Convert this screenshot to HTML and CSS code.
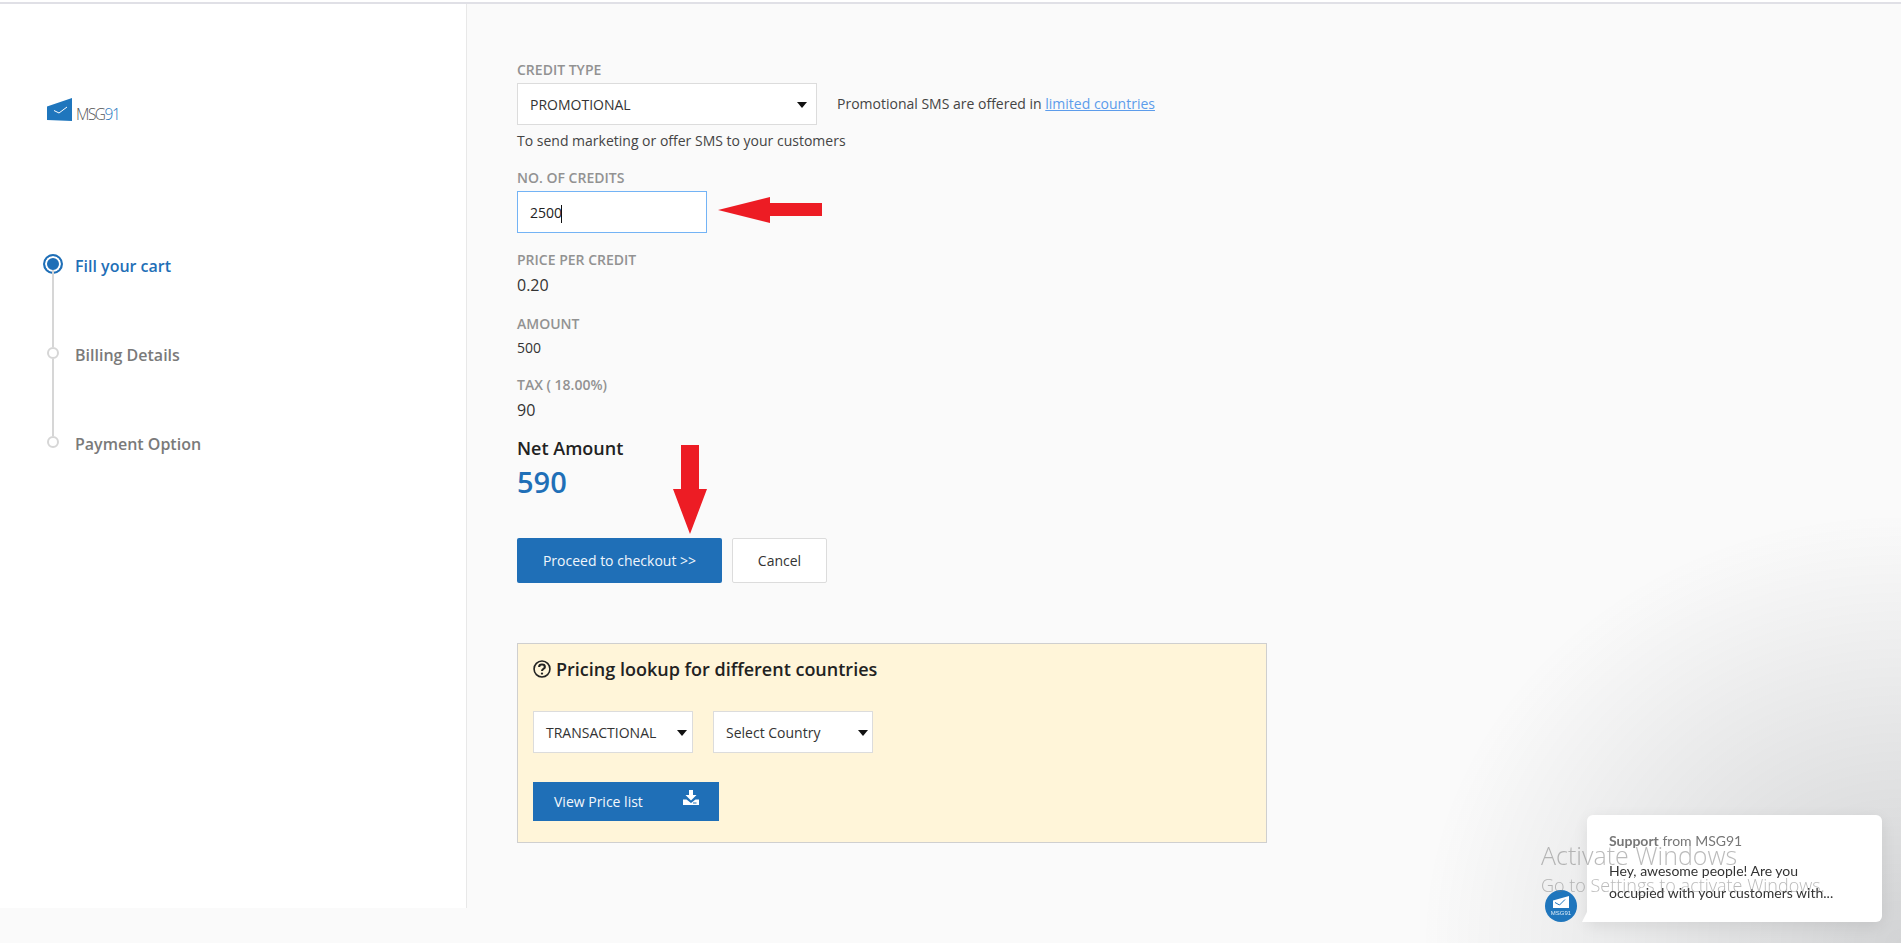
FILE: index.html
```html
<!DOCTYPE html>
<html lang="en">
<head>
<meta charset="utf-8">
<title>MSG91 - Fill your cart</title>
<link rel="stylesheet" href="styles.css">
</head>
<body>
<div class="topline"></div>
<div class="page">
  <aside class="sidebar">
    <div class="logo">
      <svg class="logo-mark" width="25" height="23" viewBox="0 0 25 23"><path fill="#1f76bd" d="M0 8.500 25 0V23L0 22Z"/><path fill="none" stroke="#fff" stroke-width="1" d="M7 12.500 12 15 20 9"/></svg>
      <span class="logo-text">MSG<span class="logo-num">91</span></span>
    </div>
    <ol class="steps">
      <li class="step step-active"><span class="dot"></span>Fill your cart</li>
      <li class="step"><span class="dot"></span>Billing Details</li>
      <li class="step"><span class="dot"></span>Payment Option</li>
    </ol>
  </aside>
  <main class="content">
    <div class="label label-first">CREDIT TYPE</div>
    <div class="type-row">
      <div class="select select-type">PROMOTIONAL<span class="caret"></span></div>
      <span class="type-note">Promotional SMS are offered in <a href="#">limited countries</a></span>
    </div>
    <p class="hint">To send marketing or offer SMS to your customers</p>
    <div class="label label-credits">NO. OF CREDITS</div>
    <div class="credits-row">
      <div class="input">2500<span class="cursor"></span></div>
      <svg class="arrow-left" width="104" height="26" viewBox="0 0 104 26"><path fill="#ed1c24" d="M0 13 52 0V6H104V19H52V26Z"/></svg>
    </div>
    <div class="label label-price">PRICE PER CREDIT</div>
    <div class="value value-lg">0.20</div>
    <div class="label label-amount">AMOUNT</div>
    <div class="value value-sm">500</div>
    <div class="label label-tax">TAX ( 18.00%)</div>
    <div class="value value-lg">90</div>
    <div class="net-label">Net Amount</div>
    <div class="net-value">590</div>
    <div class="actions">
      <button class="btn btn-primary">Proceed to checkout &gt;&gt;</button>
      <button class="btn btn-cancel">Cancel</button>
      <svg class="arrow-down" width="34" height="89" viewBox="0 0 34 89"><path fill="#ed1c24" d="M8 0H26V44H34L17 89 0 44H8Z"/></svg>
    </div>
    <section class="lookup">
      <h3 class="lookup-title">
        <svg width="18" height="18" viewBox="0 0 17 17"><circle cx="8.500" cy="8.500" r="7.500" fill="none" stroke="#222" stroke-width="1.500"/><path fill="none" stroke="#222" stroke-width="2" d="M5.800 6.500C5.800 3.500 11.200 3.500 11.200 6.500 11.200 8.300 8.500 8.300 8.500 10.500"/><circle cx="8.500" cy="12.800" r="1.100" fill="#222"/></svg>
        Pricing lookup for different countries
      </h3>
      <div class="lookup-selects">
        <div class="select select-tx">TRANSACTIONAL<span class="caret"></span></div>
        <div class="select select-country">Select Country<span class="caret"></span></div>
      </div>
      <button class="btn-price">View Price list
        <svg class="dl-icon" width="16" height="15" viewBox="0 0 16 15"><path fill="#fff" d="M6 0H10V5H13.500L8 10.500 2.500 5H6Z"/><path fill="#fff" d="M0 9.500H3.500L8 13 12.500 9.500H16V15H0Z"/><path fill="#1f6fb7" d="M10 12.500H13.500V13.500H10Z"/></svg>
      </button>
    </section>
  </main>
</div>
<div class="chat-glow"></div>
<div class="chat">
  <span class="chat-avatar">
    <svg width="16" height="12" viewBox="0 0 16 12"><path fill="#fff" d="M0 4.500 16 0V12H0Z"/><path fill="none" stroke="#1f76bd" d="M2 6.500 6.500 9 12 3.500"/></svg>
    <span class="chat-avatar-text">MSG91</span>
  </span>
  <div class="chat-bubble">
    <div class="chat-from"><b>Support</b> from MSG91</div>
    <div class="chat-msg">Hey, awesome people! Are you<br>occupied with your customers with...</div>
  </div>
</div>
<div class="watermark">
  <div class="wm-title">Activate Windows</div>
  <div class="wm-sub">Go to Settings to activate Windows.</div>
</div>
</body>
</html>
```
FILE: styles.css
```css
* { box-sizing: border-box; }
html, body { margin: 0; height: 100%; }
body {
  height: 943px;
  overflow: hidden;
  background: #fafafa;
  font-family: "Open Sans", sans-serif;
  color: #333;
}
.topline { height: 4px; background: #fff; border-bottom: 2px solid #e0e0e6; }
.page { display: flex; height: 904px; }
.sidebar {
  width: 467px;
  flex: none;
  background: #fff;
  border-right: 1px solid #e8e8e8;
  padding: 91px 0 0 47px;
}
.logo { display: flex; align-items: flex-end; gap: 4px; height: 26px; }
.logo-mark { display: block; }
.logo-text { font-size: 15.500px; letter-spacing: -1.500px; color: #555; line-height: 20px; font-weight: 300; margin-bottom: -3px; }
.logo-num { color: #1f76bd; }
.steps { list-style: none; margin: 134px 0 0; padding: 0; }
.step {
  position: relative;
  height: 89px;
  padding-left: 28px;
  font-size: 16px;
  font-weight: 600;
  line-height: 22px;
  color: #7a7a7a;
}
.step-active { color: #1f6fb7; }
.dot {
  position: absolute;
  left: 0;
  top: 3px;
  width: 12px;
  height: 12px;
  border: 2px solid #d6d6d6;
  border-radius: 50%;
  background: #fff;
}
.step:not(:last-child)::after {
  content: "";
  position: absolute;
  left: 5px;
  top: 15px;
  width: 2px;
  height: 77px;
  background: #d6d6d6;
}
.step-active .dot {
  left: -4px;
  top: -1px;
  width: 20px;
  height: 20px;
  border-color: #1f6fb7;
  background: #1f6fb7;
  box-shadow: inset 0 0 0 2px #fff;
}
.step-active::after { top: 19px; height: 73px; }
.content { flex: 1; padding-left: 50px; }
.label { font-size: 14px; font-weight: 600; color: #929292; line-height: 18px; }
.label-first { margin-top: 57px; }
.type-row { display: flex; align-items: center; margin-top: 4px; }
.select {
  position: relative;
  background: #fff;
  border: 1px solid #dcdcdc;
  height: 42px;
  padding-left: 12px;
  line-height: 41px;
  font-size: 14px;
  color: #333;
}
.select-type { width: 300px; }
.select-tx, .select-country { width: 160px; }
.caret {
  position: absolute;
  right: 9px;
  top: 18px;
  border-left: 5px solid transparent;
  border-right: 5px solid transparent;
  border-top: 6px solid #111;
}
.select-tx .caret { right: 5px; }
.select-country .caret { right: 4px; }
.type-note { margin-left: 20px; font-size: 14px; color: #444; line-height: 20px; margin-top: -1px; }
.type-note a { color: #5c9ceb; }
.hint { margin: 6px 0 0; font-size: 14px; line-height: 20px; color: #444; }
.label-credits { margin-top: 18px; }
.credits-row { display: flex; align-items: center; margin-top: 4px; }
.input {
  width: 190px;
  height: 42px;
  background: #fff;
  border: 1px solid #73b3f5;
  padding-left: 12px;
  line-height: 41px;
  font-size: 14px;
  color: #222;
}
.cursor { display: inline-block; width: 1px; height: 18px; background: #111; vertical-align: middle; margin-left: -1px; }
.arrow-left { margin-left: 11px; margin-top: -4px; }
.label-price { margin-top: 18px; }
.value { color: #333; }
.value-lg { font-size: 16px; line-height: 24px; margin-top: 4px; }
.value-sm { font-size: 14px; line-height: 20px; margin-top: 5px; }
.label-amount { margin-top: 18px; }
.label-tax { margin-top: 18px; }
.net-label { font-size: 18px; font-weight: 600; color: #222; line-height: 26px; margin-top: 13px; }
.net-value { font-size: 29px; font-weight: 600; color: #1f6fb7; line-height: 40px; margin-top: 1px; }
.actions { position: relative; display: flex; gap: 10px; margin-top: 36px; }
.btn {
  height: 45px;
  font-family: inherit;
  font-size: 14px;
  border-radius: 2px;
  cursor: pointer;
}
.btn-primary { width: 205px; background: #1f6fb7; border: 0; color: #f0f6fc; }
.btn-cancel { width: 95px; background: #fff; border: 1px solid #dcdcdc; color: #333; }
.arrow-down { position: absolute; left: 156px; top: -93px; }
.lookup {
  width: 750px;
  height: 200px;
  margin-top: 60px;
  padding: 13px 15px 15px;
  background: #fff5d9;
  border: 1px solid #cfcfcf;
}
.lookup-title {
  display: flex;
  align-items: center;
  gap: 5px;
  margin: 0;
  font-size: 18px;
  font-weight: 600;
  line-height: 24px;
  color: #222;
}
.lookup-selects { display: flex; gap: 20px; margin-top: 30px; }
.btn-price {
  position: relative;
  display: block;
  width: 186px;
  height: 39px;
  margin-top: 29px;
  padding: 0 0 0 21px;
  border: 0;
  background: #1f6fb7;
  color: #f4f8fc;
  font-family: inherit;
  font-size: 14px;
  font-weight: 400;
  text-align: left;
}
.dl-icon { position: absolute; right: 20px; top: 8px; }
.chat-glow {
  position: fixed;
  right: 0;
  bottom: 0;
  width: 480px;
  height: 430px;
  background: radial-gradient(ellipse farthest-side at 100% 100%, rgba(29, 35, 43, .18) 0, rgba(29, 35, 43, 0) 100%);
  pointer-events: none;
}
.chat {
  position: fixed;
  right: 19px;
  bottom: 21px;
  display: flex;
  align-items: flex-end;
  gap: 10px;
}
.chat-avatar {
  display: flex;
  flex-direction: column;
  align-items: center;
  justify-content: center;
  gap: 2px;
  width: 32px;
  height: 32px;
  border-radius: 50%;
  background: #1f76bd;
}
.chat-avatar svg { display: block; }
.chat-avatar-text { font-size: 6px; line-height: 6px; color: #dcecf8; font-family: "Liberation Sans", sans-serif; }
.chat-bubble {
  position: relative;
  width: 295px;
  height: 107px;
  padding: 16px 22px;
  background: #fff;
  border-radius: 6px 6px 6px 0;
  box-shadow: 0 4px 15px rgba(0, 0, 0, .08);
  font-family: Lato, sans-serif;
  font-size: 14px;
  color: #333;
}
.chat-bubble::before {
  content: "";
  position: absolute;
  left: -5px;
  bottom: 0;
  width: 6px;
  height: 12px;
  background: #fff;
  clip-path: polygon(100% 0, 100% 100%, 0 100%);
}
.chat-from { line-height: 20px; color: #777; }
.chat-from b { font-weight: 700; }
.chat-msg { margin-top: 9px; line-height: 22px; }
.watermark {
  position: fixed;
  left: 1541px;
  top: 838px;
  color: rgba(120, 120, 120, .5);
  font-family: "Open Sans", sans-serif;
  font-weight: 300;
  pointer-events: none;
}
.wm-title { font-size: 25px; line-height: 34px; }
.wm-sub { font-size: 18px; line-height: 22px; margin-top: 2px; }
```
